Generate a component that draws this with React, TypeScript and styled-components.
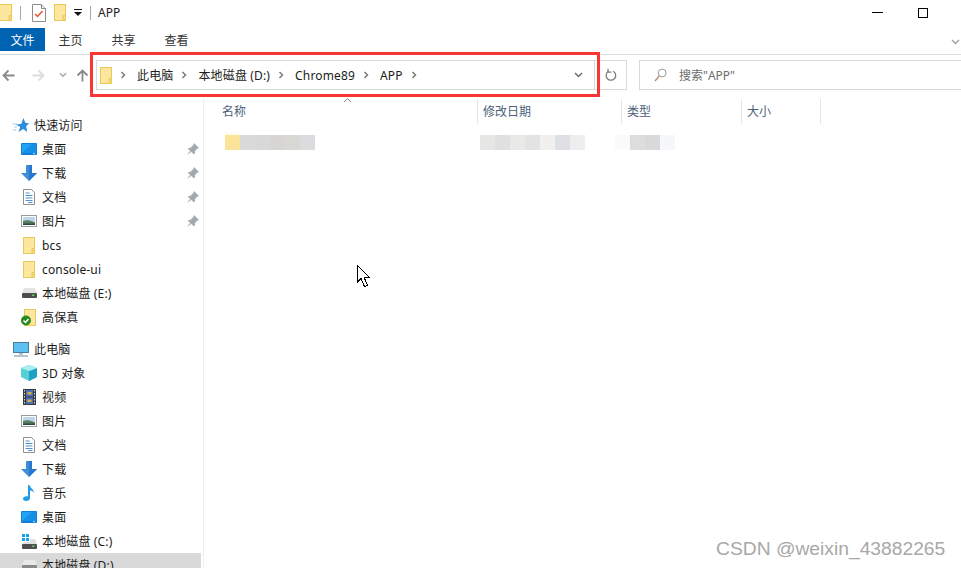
import styled, { createGlobalStyle } from 'styled-components';

const GlobalStyle = createGlobalStyle`
  html, body {
    margin: 0;
    padding: 0;
    background: #fff;
    overflow: hidden;
  }
  body {
    font-family: "Noto Sans", "Noto Sans CJK SC", sans-serif;
    font-size: 12px;
    color: #1a1a1a;
  }
  svg {
    display: block;
    flex-shrink: 0;
  }
`;

const Page = styled.div`
  position: relative;
  width: 961px;
  height: 568px;
  overflow: hidden;
  background: #fff;
`;

const TitleBar = styled.div`
  height: 28px;
  display: flex;
  align-items: center;
  padding: 0 33px 3px 0;
  box-sizing: border-box;
`;

const QuickIcons = styled.div`
  display: flex;
  align-items: center;
  margin-left: -2px;
`;

const QuickFolder = styled.span`
  margin: 0 8px;
`;

const Divider = styled.span<{ $left: number; $right: number }>`
  width: 1px;
  height: 14px;
  background: #a8a8a8;
  margin: 0 ${(p) => p.$right}px 0 ${(p) => p.$left}px;
`;

const WindowTitle = styled.span`
  font-size: 12px;
  color: #222;
`;

const WindowControls = styled.div`
  margin-left: auto;
  display: flex;
  align-items: center;
  gap: 35px;
`;

const MinLine = styled.span`
  width: 11px;
  height: 1px;
  background: #000;
`;

const MaxBox = styled.span`
  width: 8px;
  height: 8px;
  border: 1px solid #000;
`;

const Ribbon = styled.div`
  height: 27px;
  box-sizing: border-box;
  display: flex;
  align-items: flex-start;
  border-bottom: 1px solid #dadada;
  padding-right: 1px;
`;

const FileTab = styled.div`
  width: 45px;
  height: 23px;
  background: #0063b1;
  color: #fff;
  display: flex;
  align-items: center;
  justify-content: center;
  font-size: 12px;
`;

const Tab = styled.div`
  height: 23px;
  width: 53px;
  display: flex;
  align-items: center;
  justify-content: center;
  color: #333;
  font-size: 12px;
`;

const RibbonTabs = styled.div`
  display: flex;
  margin-left: -1px;
`;

const Collapse = styled.div`
  margin-left: auto;
  height: 23px;
  display: flex;
  align-items: center;
  margin-top: 2px;
`;

const NavBar = styled.div`
  height: 44px;
  display: flex;
  align-items: flex-start;
  padding-top: 5px;
  box-sizing: border-box;
`;

const NavButtons = styled.div`
  width: 96px;
  height: 30px;
  flex-shrink: 0;
  display: flex;
  align-items: center;
  padding-left: 2px;
  box-sizing: border-box;
`;

const NavGap = styled.span<{ $w: number }>`
  width: ${(p) => p.$w}px;
`;

const AddressBar = styled.div`
  width: 499px;
  height: 30px;
  flex-shrink: 0;
  box-sizing: border-box;
  border: 1px solid #d9d9d9;
  display: flex;
  align-items: center;
  padding-left: 3px;
`;

const Crumbs = styled.div`
  display: flex;
  align-items: center;
  margin-left: 8px;
`;

const CrumbItem = styled.div`
  display: flex;
  align-items: center;
`;

const Crumb = styled.span`
  color: #1c1c1c;
  font-size: 12px;
  letter-spacing: 0.15px;
  margin: 0 8px 0 11px;
  white-space: nowrap;
`;

const AddressDrop = styled.div`
  margin-left: auto;
  width: 31px;
  display: flex;
  justify-content: center;
`;

const RefreshCell = styled.div`
  width: 32px;
  height: 30px;
  flex-shrink: 0;
  box-sizing: border-box;
  border: 1px solid #d9d9d9;
  border-left: none;
  display: flex;
  align-items: center;
  justify-content: center;
`;

const SearchBox = styled.div`
  width: 340px;
  height: 30px;
  flex-shrink: 0;
  margin-left: 12px;
  box-sizing: border-box;
  border: 1px solid #d9d9d9;
  display: flex;
  align-items: center;
  padding-left: 14px;
  gap: 12px;
  color: #6d6d6d;
  font-size: 12px;
`;

const Body = styled.div`
  display: flex;
  height: 469px;
`;

const Sidebar = styled.div`
  width: 204px;
  flex-shrink: 0;
  box-sizing: border-box;
  border-right: 1px solid #f0f0f0;
  padding-top: 14px;
`;

const NavGroup = styled.div`
  margin-bottom: 8px;
`;

const Row = styled.div<{ $head?: boolean; $selected?: boolean }>`
  width: 201px;
  height: 24px;
  display: flex;
  align-items: center;
  box-sizing: border-box;
  padding-left: ${(p) => (p.$head ? 13 : 21)}px;
  padding-right: 2px;
  background: ${(p) => (p.$selected ? '#d9d9d9' : 'transparent')};
  color: #1a1a1a;
  font-size: 12px;
  letter-spacing: 0.15px;
  white-space: nowrap;
`;

const RowIcon = styled.span`
  width: 16px;
  display: flex;
  justify-content: center;
  margin-right: 5px;
`;

const Pin = styled.span`
  margin-left: auto;
`;

const Main = styled.div`
  flex: 1;
  position: relative;
`;

const HeaderRow = styled.div`
  display: flex;
  height: 25px;
`;

const HeaderCell = styled.div<{ $w: number; $pad?: number }>`
  width: ${(p) => p.$w}px;
  box-sizing: border-box;
  border-right: 1px solid #e5e5e5;
  display: flex;
  align-items: center;
  padding-left: ${(p) => p.$pad ?? 5}px;
  padding-bottom: 2px;
  color: #4c607a;
  font-size: 12px;
`;

const SortArrow = styled.div`
  position: absolute;
  left: 139px;
  top: -2px;
`;

const FileRow = styled.div`
  display: flex;
  height: 15px;
  margin-top: 11px;
  padding-left: 21px;
`;

const BlurGroup = styled.div<{ $w: number }>`
  width: ${(p) => p.$w}px;
  display: flex;
`;

const BlurCell = styled.span<{ $c: string; $halo?: boolean }>`
  width: 15px;
  height: 15px;
  background: ${(p) => p.$c};
  box-shadow: ${(p) => (p.$halo ? '0 -3px 0 #fffcf2' : 'none')};
`;

const RedFrame = styled.div`
  position: absolute;
  left: 90px;
  top: 52px;
  width: 510px;
  height: 45px;
  box-sizing: border-box;
  border: 3px solid #f93636;
  pointer-events: none;
`;

const Cursor = styled.div`
  position: absolute;
  left: 357px;
  top: 265px;
`;

const Watermark = styled.div`
  position: absolute;
  left: 716px;
  top: 536px;
  font-family: "Liberation Sans", sans-serif;
  font-size: 19.25px;
  line-height: 26px;
  color: #a8a8a8;
  white-space: nowrap;
`;

const TiltedArrow = styled.span<{ $turn?: string }>`
  display: block;
  transform: ${(p) => p.$turn ?? 'none'};
`;

const Folder = ({ w = 12 }: { w?: number }) => (
  <svg width={w} height="17" viewBox={`0 0 ${w} 17`}>
    <rect x=".5" y=".5" width={w - 1} height="16" fill="#fde79f" stroke="#e9c95c" />
    <path d={`M${w - 3} 11.5h2.500v5H${w - 3}z`} fill="#f8d775" stroke="#e9c95c" />
  </svg>
);

const Chev = () => (
  <svg width="6" height="8" viewBox="0 0 6 8">
    <path d="M1.500 1l3 3-3 3" fill="none" stroke="#7a7a7a" strokeWidth="1.500" />
  </svg>
);

const Down = ({ c = '#8a8a8a', w = 9 }: { c?: string; w?: number }) => (
  <svg width={w} height="6" viewBox="0 0 9 6">
    <path d="M1 1l3.500 3.500L8 1" fill="none" stroke={c} strokeWidth="1.500" />
  </svg>
);

const DocCheck = () => (
  <svg width="14" height="18" viewBox="0 0 14 18">
    <path d="M.5.5h9l4 4v13H.5z" fill="#fff" stroke="#8d8d8d" />
    <path d="M9.500.5v4h4" fill="#eee" stroke="#8d8d8d" />
    <path d="M3 10l2.500 2.500L10.500 7" fill="none" stroke="#e8562a" strokeWidth="1.500" />
  </svg>
);

const Arrow = ({ c, turn }: { c: string; turn?: string }) => (
  <TiltedArrow $turn={turn}>
    <svg width="13" height="13" viewBox="0 0 13 13">
      <path d="M1.500 6.500h11M6.500 1.500l-5 5 5 5" fill="none" stroke={c} strokeWidth="1.800" />
    </svg>
  </TiltedArrow>
);

const Refresh = () => (
  <svg width="12" height="14" viewBox="0 0 12 14">
    <path d="M8.200 3.200a4.800 4.800 0 1 1-4.600 0" fill="none" stroke="#7d7d7d" strokeWidth="1.300" />
    <path d="M3 .8v3.400h3.400" fill="none" stroke="#7d7d7d" strokeWidth="1.300" />
  </svg>
);

const SearchGlass = () => (
  <svg width="13" height="14" viewBox="0 0 13 14">
    <circle cx="8.200" cy="5" r="3.900" fill="none" stroke="#9a9a9a" />
    <path d="M5.300 8L1 13" stroke="#b08a70" strokeWidth="1.200" />
  </svg>
);

const StarIcon = () => (
  <svg width="16" height="15" viewBox="0 0 16 15">
    <path d="M0 6h4M1 9h3M0 12h3" stroke="#9ccff3" />
    <path d="M10.500 0l1.800 4.800 3.700.4-2.800 3.100 1 5.700-4-2.900-4.700 2.900 1.700-5L3 6.500l5.200-.6z" fill="#2b8fdc" />
  </svg>
);

const Desktop = () => (
  <svg width="16" height="12" viewBox="0 0 16 12">
    <rect width="16" height="12" rx="1" fill="#0f7fd8" />
    <rect x="1" y="1" width="14" height="9" fill="#23a4f2" />
    <path d="M1 10L11 1h4v9z" fill="#1490e6" />
    <path d="M12 10.700h2" stroke="#bfe2fa" />
  </svg>
);

const Download = () => (
  <svg width="16" height="16" viewBox="0 0 16 16">
    <path d="M5 0h6v8h5l-8 8-8-8h5z" fill="#3f8edb" />
    <path d="M8 0h3v8h5l-8 8z" fill="#2a78c9" />
  </svg>
);

const Doc = () => (
  <svg width="12" height="16" viewBox="0 0 12 16">
    <path d="M.5.5h8l3 3v12H.5z" fill="#fff" stroke="#8f8f8f" />
    <path d="M2.500 4h4M2.500 6.500h7M2.500 9h7M2.500 11.500h7M5 13.500h4.500" stroke="#4f93d3" />
  </svg>
);

const Picture = () => (
  <svg width="16" height="12" viewBox="0 0 16 12">
    <rect x=".5" y=".5" width="15" height="11" fill="#fff" stroke="#9a9a9a" />
    <rect x="2" y="2" width="12" height="4" fill="#bcd6ea" />
    <path d="M2 6c3-1 6-1 12 1v3H2z" fill="#5d7c66" />
    <path d="M2 8.500h12V10H2z" fill="#2f4a3c" />
  </svg>
);

const Drive = () => (
  <svg width="15" height="10" viewBox="0 0 15 10">
    <path d="M2 0h11l2 5H0z" fill="#e4e4e4" />
    <rect y="5" width="15" height="5" rx="1" fill="#4e4e4e" />
    <rect x="10" y="6.500" width="2.500" height="1.500" fill="#4fd060" />
  </svg>
);

const SyncFolder = () => (
  <svg width="16" height="17" viewBox="0 0 16 17">
    <rect x="3.500" y=".5" width="11" height="16" fill="#fde79f" stroke="#e9c95c" />
    <circle cx="5" cy="11.500" r="5" fill="#2a8a1f" />
    <path d="M2.500 11.500l2 2 3-3.500" fill="none" stroke="#fff" strokeWidth="1.500" />
  </svg>
);

const Monitor = () => (
  <svg width="16" height="15" viewBox="0 0 16 15">
    <rect x=".5" y=".5" width="15" height="10" fill="#5cc0f2" stroke="#4a7d9c" />
    <path d="M6 11h4v2H6z" fill="#b8c4cc" />
    <path d="M1 14h14" stroke="#9fb4c2" strokeWidth="1.500" />
  </svg>
);

const Cube = () => (
  <svg width="16" height="16" viewBox="0 0 16 16">
    <path d="M8 0l8 3v9l-8 4-8-4V3z" fill="#55d0d8" />
    <path d="M8 6l8-3v9l-8 4z" fill="#1e9fc4" />
    <path d="M8 0l8 3-8 3-8-3z" fill="#a6eef0" />
  </svg>
);

const Film = () => (
  <svg width="13" height="16" viewBox="0 0 13 16">
    <rect width="13" height="16" fill="#3a3a3a" />
    <rect x="3" y="1" width="7" height="6.500" fill="#4d6fc0" />
    <rect x="3" y="8.500" width="7" height="6.500" fill="#4d6fc0" />
    <path d="M4.500 3h4v2.500h-4zM4.500 10.500h4V13h-4z" fill="#d8b040" />
    <path d="M1.500 1v14M11.500 1v14" stroke="#ddd" strokeDasharray="1.500 1.500" />
  </svg>
);

const Music = () => (
  <svg width="12" height="16" viewBox="0 0 12 16">
    <path d="M5 0h1.500c.5 3 4.500 4 4.500 8-1-2-3-2.500-4-2.500V13c0 1.800-1.800 3-4 3C1 16 0 15 0 13.800 0 12 2.500 11 5 11.500z" fill="#1f9be8" />
  </svg>
);

const WinDrive = () => (
  <svg width="15" height="15" viewBox="0 0 15 15">
    <path d="M0 0h3v3H0zM4 0h3v3H4zM0 4h3v3H0zM4 4h3v3H4z" fill="#12a3ec" />
    <path d="M8 5h5l2 5H1l1-2h6z" fill="#e0e0e0" />
    <rect y="10" width="15" height="5" rx="1" fill="#4e4e4e" />
    <rect x="10" y="11.500" width="2.500" height="1.500" fill="#4fd060" />
  </svg>
);

const LightDrive = () => (
  <svg width="15" height="10" viewBox="0 0 15 10">
    <path d="M2 0h11l2 5H0z" fill="#e9e9e9" />
    <rect y="5" width="15" height="5" rx="1" fill="#8a8a8a" />
  </svg>
);

const PinIcon = () => (
  <svg width="12" height="12" viewBox="0 0 12 12">
    <path d="M7 0l5 5-1.500.5L8 8v2.500L6.500 11l-5.500-5 .5-1L4 4.500 6.500 1.500z" fill="#a4a9ad" />
    <path d="M3 8l-3 4 4-3z" fill="#a4a9ad" />
  </svg>
);

const CursorIcon = () => (
  <svg width="14" height="23" viewBox="0 0 14 23">
    <path
      d="M.5.5v16.500l3.500-3.500 3.500 8 3-1.300-3.300-7.700h5z"
      fill="#fff"
      stroke="#000"
      strokeWidth="1"
      shapeRendering="crispEdges"
    />
  </svg>
);

const quickAccess = [
  { label: '桌面', icon: <Desktop />, pinned: true },
  { label: '下载', icon: <Download />, pinned: true },
  { label: '文档', icon: <Doc />, pinned: true },
  { label: '图片', icon: <Picture />, pinned: true },
  { label: 'bcs', icon: <Folder /> },
  { label: 'console-ui', icon: <Folder /> },
  { label: '本地磁盘 (E:)', icon: <Drive /> },
  { label: '高保真', icon: <SyncFolder /> },
];

const thisPc = [
  { label: '3D 对象', icon: <Cube /> },
  { label: '视频', icon: <Film /> },
  { label: '图片', icon: <Picture /> },
  { label: '文档', icon: <Doc /> },
  { label: '下载', icon: <Download /> },
  { label: '音乐', icon: <Music /> },
  { label: '桌面', icon: <Desktop /> },
  { label: '本地磁盘 (C:)', icon: <WinDrive /> },
];

const blurName = ['#fbe39a', '#d9d9d9', '#d8d8d8', '#d8d6d5', '#d8d8d5', '#dcdcdf'];
const blurDate = ['#e6e6e5', '#e0e0e0', '#e9e9e7', '#e3e3e3', '#f1f0ef', '#dfe0e3', '#eeeeee'];
const blurType = ['#fafafa', '#dddddd', '#d9d9d9', '#f6f7fa'];

const crumbs = ['此电脑', '本地磁盘 (D:)', 'Chrome89', 'APP'];

const App = () => (
  <Page>
    <GlobalStyle />
    <TitleBar>
      <QuickIcons>
        <Folder w={14} />
        <Divider $left={8} $right={11} />
        <DocCheck />
        <QuickFolder>
          <Folder />
        </QuickFolder>
        <svg width="8" height="7" viewBox="0 0 8 7">
          <path d="M0 0h8v1H0zM0 3h8L4 7z" fill="#111" />
        </svg>
        <Divider $left={8} $right={7} />
      </QuickIcons>
      <WindowTitle>APP</WindowTitle>
      <WindowControls>
        <MinLine />
        <MaxBox />
      </WindowControls>
    </TitleBar>
    <Ribbon>
      <FileTab>文件</FileTab>
      <RibbonTabs>
        <Tab>主页</Tab>
        <Tab>共享</Tab>
        <Tab>查看</Tab>
      </RibbonTabs>
      <Collapse>
        <Down c="#a0a0a0" />
      </Collapse>
    </Ribbon>
    <NavBar>
      <NavButtons>
        <Arrow c="#8a8a8a" />
        <NavGap $w={17} />
        <Arrow c="#dcdcdc" turn="scaleX(-1)" />
        <NavGap $w={14} />
        <Down c="#a8a8a8" w={8} />
        <NavGap $w={9} />
        <Arrow c="#8a8a8a" turn="rotate(90deg)" />
      </NavButtons>
      <AddressBar>
        <Folder />
        <Crumbs>
          {crumbs.map((c) => (
            <CrumbItem key={c}>
              <Chev />
              <Crumb>{c}</Crumb>
            </CrumbItem>
          ))}
          <Chev />
        </Crumbs>
        <AddressDrop>
          <Down c="#6e6e6e" w={9} />
        </AddressDrop>
      </AddressBar>
      <RefreshCell>
        <Refresh />
      </RefreshCell>
      <SearchBox>
        <SearchGlass />
        搜索"APP"
      </SearchBox>
    </NavBar>
    <Body>
      <Sidebar>
        <NavGroup>
          <Row $head>
            <RowIcon>
              <StarIcon />
            </RowIcon>
            快速访问
          </Row>
          {quickAccess.map((item) => (
            <Row key={item.label}>
              <RowIcon>{item.icon}</RowIcon>
              {item.label}
              {item.pinned && (
                <Pin>
                  <PinIcon />
                </Pin>
              )}
            </Row>
          ))}
        </NavGroup>
        <NavGroup>
          <Row $head>
            <RowIcon>
              <Monitor />
            </RowIcon>
            此电脑
          </Row>
          {thisPc.map((item) => (
            <Row key={item.label}>
              <RowIcon>{item.icon}</RowIcon>
              {item.label}
            </Row>
          ))}
          <Row $selected>
            <RowIcon>
              <LightDrive />
            </RowIcon>
            本地磁盘 (D:)
          </Row>
        </NavGroup>
      </Sidebar>
      <Main>
        <SortArrow>
          <svg width="9" height="6" viewBox="0 0 9 6">
            <path d="M1 5l3.500-3.500L8 5" fill="none" stroke="#8a8a8a" />
          </svg>
        </SortArrow>
        <HeaderRow>
          <HeaderCell $w={274} $pad={18}>
            名称
          </HeaderCell>
          <HeaderCell $w={144}>修改日期</HeaderCell>
          <HeaderCell $w={120}>类型</HeaderCell>
          <HeaderCell $w={79}>大小</HeaderCell>
        </HeaderRow>
        <FileRow>
          <BlurGroup $w={255}>
            {blurName.map((c, i) => (
              <BlurCell key={i} $c={c} $halo={i === 0} />
            ))}
          </BlurGroup>
          <BlurGroup $w={135}>
            {blurDate.map((c, i) => (
              <BlurCell key={i} $c={c} />
            ))}
          </BlurGroup>
          <BlurGroup $w={60}>
            {blurType.map((c, i) => (
              <BlurCell key={i} $c={c} />
            ))}
          </BlurGroup>
        </FileRow>
      </Main>
    </Body>
    <RedFrame />
    <Cursor>
      <CursorIcon />
    </Cursor>
    <Watermark>CSDN @weixin_43882265</Watermark>
  </Page>
);

export default App;
